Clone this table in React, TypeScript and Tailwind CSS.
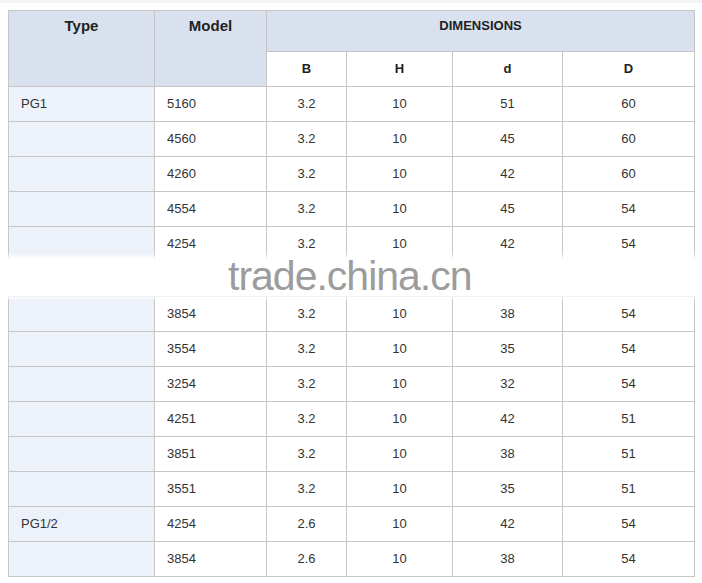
import React from "react";

type Row = { type: string; model: string; b: string; h: string; d: string; D: string };

const rows: Row[] = [
  { type: "PG1", model: "5160", b: "3.2", h: "10", d: "51", D: "60" },
  { type: "", model: "4560", b: "3.2", h: "10", d: "45", D: "60" },
  { type: "", model: "4260", b: "3.2", h: "10", d: "42", D: "60" },
  { type: "", model: "4554", b: "3.2", h: "10", d: "45", D: "54" },
  { type: "", model: "4254", b: "3.2", h: "10", d: "42", D: "54" },
  // row hidden under the watermark
  { type: "", model: "", b: "", h: "", d: "", D: "" },
  { type: "", model: "3854", b: "3.2", h: "10", d: "38", D: "54" },
  { type: "", model: "3554", b: "3.2", h: "10", d: "35", D: "54" },
  { type: "", model: "3254", b: "3.2", h: "10", d: "32", D: "54" },
  { type: "", model: "4251", b: "3.2", h: "10", d: "42", D: "51" },
  { type: "", model: "3851", b: "3.2", h: "10", d: "38", D: "51" },
  { type: "", model: "3551", b: "3.2", h: "10", d: "35", D: "51" },
  { type: "PG1/2", model: "4254", b: "2.6", h: "10", d: "42", D: "54" },
  { type: "", model: "3854", b: "2.6", h: "10", d: "38", D: "54" },
];

const App: React.FC = () => {
  return (
    <div className="relative w-[702px] h-[583px] bg-white font-['Liberation_Sans',Arial,sans-serif] text-[#333]">
      <div className="h-[3px] bg-[#f4f4f4]" />
      <div className="pl-2 pt-[7px]">
        <table className="table-fixed border-collapse border border-[#c6c6c6] w-[686px]">
          <colgroup>
            <col className="w-[146px]" />
            <col className="w-[112px]" />
            <col className="w-[80px]" />
            <col className="w-[106px]" />
            <col className="w-[110px]" />
            <col className="w-[132px]" />
          </colgroup>
          <thead>
            <tr className="h-[41px] bg-[#d9e1ee]">
              <th rowSpan={2} className="border border-[#c6c6c6] align-top pt-[4px] text-[15px] font-bold text-[#222]">
                Type
              </th>
              <th rowSpan={2} className="border border-[#c6c6c6] align-top pt-[4px] text-[15px] font-bold text-[#222]">
                Model
              </th>
              <th colSpan={4} className="border border-[#c6c6c6] align-top pt-[5px] text-[13px] font-bold text-[#222]">
                DIMENSIONS
              </th>
            </tr>
            <tr className="h-[35px] bg-white text-[13px] font-bold text-[#222]">
              <th className="border border-[#c6c6c6] pb-[1px]">B</th>
              <th className="border border-[#c6c6c6] pb-[1px]">H</th>
              <th className="border border-[#c6c6c6] pb-[1px]">d</th>
              <th className="border border-[#c6c6c6] pb-[1px]">D</th>
            </tr>
          </thead>
          <tbody className="text-[13px]">
            {rows.map((r, i) => (
              <tr key={i} className="h-[35px]">
                <td className="border border-[#c6c6c6] bg-[#edf1fa] pl-3 pb-[1px]">{r.type}</td>
                <td className="border border-[#c6c6c6] pl-3 pb-[1px]">{r.model}</td>
                <td className="border border-[#c6c6c6] text-center pb-[1px]">{r.b}</td>
                <td className="border border-[#c6c6c6] text-center pb-[1px]">{r.h}</td>
                <td className="border border-[#c6c6c6] text-center pb-[1px]">{r.d}</td>
                <td className="border border-[#c6c6c6] text-center pb-[1px]">{r.D}</td>
              </tr>
            ))}
          </tbody>
        </table>
      </div>

      {/* watermark band */}
      <div className="absolute left-0 top-[256px] w-[702px] h-[42px] bg-white blur-[2px]" />
      <div className="absolute left-[228px] top-[251px] text-[41px] leading-[50px] tracking-[-1px] text-[#9c9c9c] font-['Liberation_Sans',Arial,sans-serif]">
        trade.china.cn
      </div>
    </div>
  );
};

export default App;
